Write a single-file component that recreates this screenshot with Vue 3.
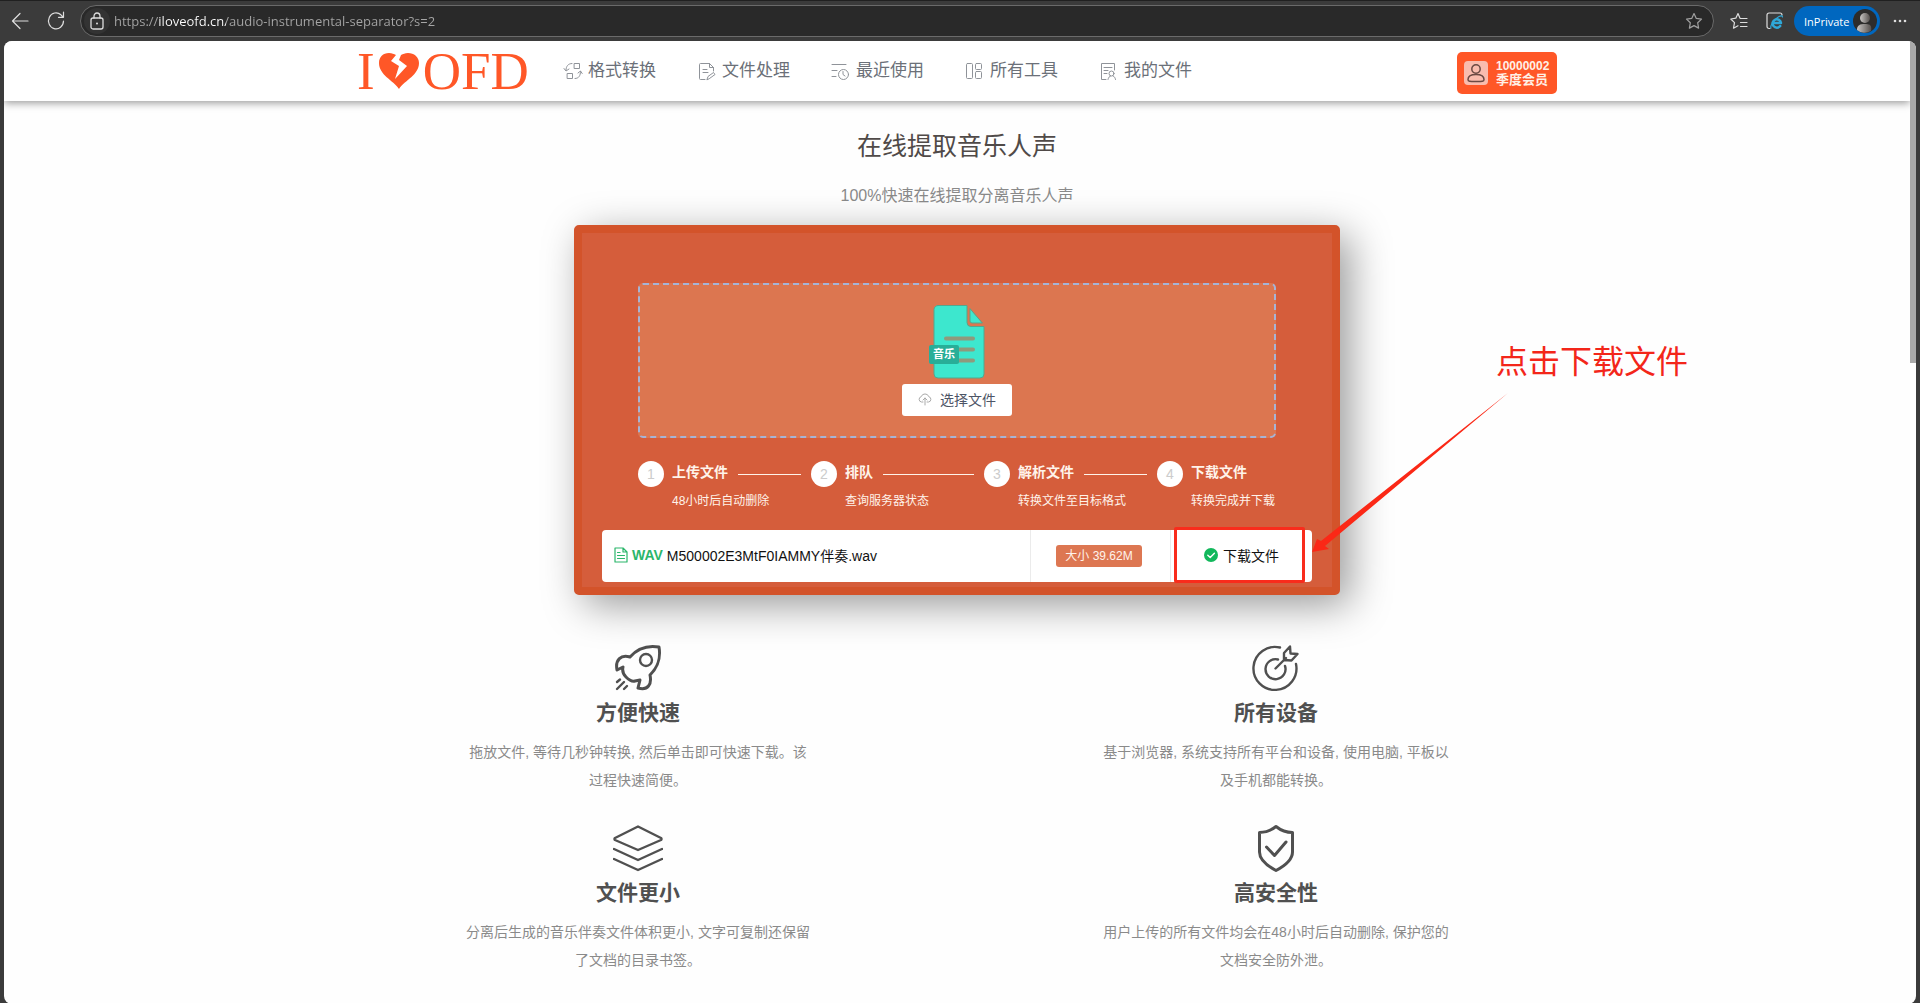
<script setup>
import { ref } from 'vue'

const address = ref('https://iloveofd.cn/audio-instrumental-separator?s=2')

const nav = [
  { icon: 'swap', label: '格式转换' },
  { icon: 'edit', label: '文件处理' },
  { icon: 'recent', label: '最近使用' },
  { icon: 'tools', label: '所有工具' },
  { icon: 'mine', label: '我的文件' }
]

const steps = [
  { title: '上传文件', note: '48小时后自动删除' },
  { title: '排队', note: '查询服务器状态' },
  { title: '解析文件', note: '转换文件至目标格式' },
  { title: '下载文件', note: '转换完成并下载' }
]

const features = [
  { icon: 'rocket', title: '方便快速', text: '拖放文件, 等待几秒钟转换, 然后单击即可快速下载。该过程快速简便。' },
  { icon: 'target', title: '所有设备', text: '基于浏览器, 系统支持所有平台和设备, 使用电脑, 平板以及手机都能转换。' },
  { icon: 'layers', title: '文件更小', text: '分离后生成的音乐伴奏文件体积更小, 文字可复制还保留了文档的目录书签。' },
  { icon: 'shield', title: '高安全性', text: '用户上传的所有文件均会在48小时后自动删除, 保护您的文档安全防外泄。' }
]
</script>

<template>
  <div class="browser">
    <div class="toolbar">
      <button class="tool" aria-label="返回">
        <svg width="18" height="18" viewBox="0 0 18 18"><path d="M17 9H1.5M9 1.5 1.5 9 9 16.500" /></svg>
      </button>
      <button class="tool reload" aria-label="刷新">
        <svg width="18" height="20" viewBox="0 0 18 20"><path d="M16.500 10a7.500 8 0 1 1-2.600-6.200L16 6M16.500 1v5.300h-5" /></svg>
      </button>
      <div class="address">
        <span class="lock">
          <svg width="14" height="18" viewBox="0 0 14 18"><rect x="1" y="6" width="12" height="11" rx="2" /><path d="M4 6V4.500a3 3.500 0 0 1 6 0V6" /><circle cx="7" cy="11.500" r="1" class="solid" /></svg>
        </span>
        <input v-model="address" type="text" aria-label="地址" spellcheck="false" />
        <button class="tool star" aria-label="收藏">
          <svg width="18" height="18" viewBox="0 0 18 18"><path d="m9 1.500 2.300 4.900 5.200.7-3.800 3.700.9 5.300L9 13.600l-4.600 2.500.9-5.300L1.500 7.100l5.200-.7z" /></svg>
        </button>
      </div>
      <button class="tool fav" aria-label="收藏夹">
        <svg width="18" height="18" viewBox="0 0 18 18"><path d="M10 6.200 8 1.500 5.800 6.200l-5 .8 3.700 3.700-1 5.500L8 13.800M10.500 6.500H17M10.500 10.500H17M10.500 14.500H17" /></svg>
      </button>
      <button class="tool ie" aria-label="IE 模式">
        <svg width="18" height="18" viewBox="0 0 18 18"><path d="M4 16.500H3A2 2 0 0 1 1 14.500V3a2 2 0 0 1 2-2h11a2 2 0 0 1 2 2" /><path class="e" d="M6.500 11H15a4.200 4.200 0 1 0-.8 3" /><path class="ring" d="M5 16c-1.500-2 4-9.500 8-11.500 2-1 3.500-1 3.500.500" /></svg>
      </button>
      <button class="private">InPrivate
        <svg width="24" height="24" viewBox="0 0 24 24"><defs><linearGradient id="av"><stop offset="0" stop-color="#c9c6c4" /><stop offset="1" stop-color="#55504d" /></linearGradient></defs><circle cx="12" cy="12" r="12" fill="#2d2c2b" /><circle cx="12" cy="9" r="5" fill="url(#av)" /><path d="M4 21c0-5 3-6 8-6s7 1 6 7a12 12 0 0 1-14-1z" fill="url(#av)" /></svg>
      </button>
      <button class="tool more" aria-label="更多">
        <svg width="16" height="4" viewBox="0 0 16 4"><g class="solid"><circle cx="3" cy="2" r="1.300" /><circle cx="8" cy="2" r="1.300" /><circle cx="13" cy="2" r="1.300" /></g></svg>
      </button>
    </div>

    <div class="window">
      <div class="page">
        <header>
          <div class="container">
            <a class="logo" href="#" aria-label="I love OFD"><span>I</span>
              <svg width="40" height="36" viewBox="0 0 40 36"><path d="M20 36C14 27 0 22 0 10 0 4 4 0 10 0c3 0 5 1 7 2l-5 6 8 5-4 13 12-13-8-6 2-5c2-1 4-2 7-2 6 0 11 4 11 10 0 12-14 17-20 26z" /></svg>
              <span>OFD</span></a>
            <nav>
              <a v-for="item in nav" :key="item.icon" href="#">
                <svg width="20" height="20" viewBox="0 0 20 20">
                  <g v-if="item.icon === 'swap'"><path d="M11.500 2.500h5v5h-5zM4.500 12.500h5v5h-5zM9 2.500C5 2.500 3 5.500 3 9M1 7.500 3 10l3-2M12 17.500c4 0 5.500-3 5.500-7M15 12l2.500-2 1.700 2.500" /></g>
                  <g v-else-if="item.icon === 'edit'"><path d="M8 18.500H3.500a1 1 0 0 1-1-1v-14a1 1 0 0 1 1-1h9l4 4V10M12.500 2.500v4h4M6 8.500h4M6 11.500h5M10 18.500l1-3 5.500-4 1.500 2-5.500 4z" /></g>
                  <g v-else-if="item.icon === 'recent'"><path d="M1 3.500h14M1 9.500h5M1 15.500h4" /><circle cx="12.500" cy="13.500" r="5" /><path d="M12 10.500v3l2 1.500" /></g>
                  <g v-else-if="item.icon === 'tools'"><rect x="1.500" y="2.500" width="6" height="15" rx="1" /><rect x="10.500" y="2.500" width="6" height="6" rx="1" /><rect x="10.500" y="10.500" width="6" height="7" rx="1" /></g>
                  <g v-else><path d="M7 18.500H2.500v-16h13V9M5 6.500h8M5 9.500h4M5 12.500h3" /><circle cx="12.500" cy="12.500" r="2.500" /><path d="M9 18.500c.5-2 1.500-3.500 2.500-3.500M16.500 18.500c-.5-2-1-3-2.500-3.500" /></g>
                </svg>
                {{ item.label }}
              </a>
            </nav>
            <a class="member" href="#">
              <svg width="24" height="24" viewBox="0 0 24 24"><rect width="24" height="24" rx="4" /><circle cx="12" cy="8" r="4.200" /><path d="M4 18.500c0-3.500 2.500-5 8-5s8 1.500 8 5c0 2-1.500 2-8 2s-8 0-8-2z" /></svg>
              <span><b>10000002</b><b class="level">季度会员</b></span>
            </a>
          </div>
        </header>

        <main>
          <h1>在线提取音乐人声</h1>
          <p class="lead">100%快速在线提取分离音乐人声</p>

          <div class="stage">
            <section class="card">
              <div class="drop">
                <svg class="doc" width="56" height="76" viewBox="0 0 56 76">
                  <path class="sheet" d="M9 1.500h29v17a4 4 0 0 0 4 4h13V70a4 4 0 0 1-4 4H9a4 4 0 0 1-4-4V5.500a4 4 0 0 1 4-4z" />
                  <path class="sheet" d="M41 5v12a2 2 0 0 0 2 2h10z" />
                  <path class="rule" d="M17 34.500h27M17 45.500h27M17 56.500h27" />
                  <rect x="0" y="41" width="30" height="19" rx="2" />
                  <text x="15" y="54">音乐</text>
                </svg>
                <button class="choose">
                  <svg width="14" height="14" viewBox="0 0 14 14"><path d="M5 10H3.500a2.700 2.700 0 0 1-.3-5.300 4 4 0 0 1 7.600 0 2.700 2.700 0 0 1-.3 5.300H9M7 13V6M5 8l2-2 2 2" /></svg>
                  选择文件
                </button>
              </div>

              <ol class="steps">
                <li v-for="(step, i) in steps" :key="step.title">
                  <span class="num">{{ i + 1 }}</span>
                  <div class="body">
                    <strong><span>{{ step.title }}</span></strong>
                    <small>{{ step.note }}</small>
                  </div>
                </li>
              </ol>

              <div class="file">
                <div class="name">
                  <svg width="14" height="16" viewBox="0 0 14 16"><path d="M1 1h8l4 4v10H1zM9 1v4h4M3.500 5.500H6M3.500 8.500h7M3.500 11.500h7" /></svg>
                  <b>WAV</b>
                  <span>M500002E3MtF0IAMMY伴奏.wav</span>
                </div>
                <div class="size"><span>大小 39.62M</span></div>
                <div class="get">
                  <button>
                    <svg width="14" height="14" viewBox="0 0 14 14"><circle cx="7" cy="7" r="7" /><path d="m3.800 7.200 2.400 2.300 4.200-4.300" /></svg>
                    下载文件
                  </button>
                  <i class="mark"></i>
                </div>
              </div>
            </section>

            <div class="hint">点击下载文件</div>
            <svg class="arrow" width="206" height="168" viewBox="0 0 206 168"><path d="M6 162 11 149l4 2L202 3 19 156l4 3z" /></svg>
          </div>

          <section class="features">
            <article v-for="item in features" :key="item.icon">
              <svg width="50" height="48" viewBox="0 0 50 48">
                <g v-if="item.icon === 'rocket'"><path class="thick" d="M46 3c-12-2-22 2-29 10C8 10 2 16 4 26l6-3c-1 4 0 7 3 10s6 5 9 4l5-1-2 8c10 3 14-4 12-13 8-8 11-16 9-28z" /><circle cx="33" cy="16" r="6" /><path d="m4 38 3-2.500M4 45l7-7M11 45l3-3" /></g>
                <g v-else-if="item.icon === 'target'"><path d="M29 3.500A21.500 21.500 0 1 0 45 20M27 15.500A10 10 0 1 0 34 22M24.500 24.500 35 14M33 16V9l6-6.500.500 7 7 .500-6 6.500z" /></g>
                <g v-else-if="item.icon === 'layers'"><path d="M25 2.500 48 14a1.200 1.200 0 0 1 0 2L25 26 2 16a1.200 1.200 0 0 1 0-2zM1 25l24 11 24-11M1 35l24 11 24-11" /></g>
                <g v-else><path class="thick" d="M25 2.500c5 4 11 6 16.500 6V28c0 8-8 14-16.500 18.500C16.500 42 8.500 36 8.500 28V8.500c5.500 0 11.500-2 16.500-6z" /><path class="thick" d="m15.500 23 8 8.500L35 18" /></g>
              </svg>
              <h2>{{ item.title }}</h2>
              <p>{{ item.text }}</p>
            </article>
          </section>
        </main>
      </div>
      <div class="scrollbar"></div>
    </div>
  </div>
</template>

<style>
body {
  margin: 0;
  background: #3b3b3b;
}
</style>

<style scoped>
* {
  box-sizing: border-box;
}

.browser {
  display: flex;
  flex-direction: column;
  min-height: 100vh;
  background: #3b3b3b;
  font-family: "Liberation Sans", "Noto Sans CJK SC", sans-serif;
}

button {
  border: 0;
  padding: 0;
  background: none;
  font: inherit;
}

a {
  text-decoration: none;
}

svg {
  display: block;
  flex: none;
  fill: none;
  stroke-linecap: round;
  stroke-linejoin: round;
}

/* browser toolbar */
.toolbar {
  display: flex;
  align-items: center;
  height: 41px;
  padding: 0 12px 0 11px;
  border-top: 1px solid #202020;
}

.tool svg {
  stroke: #dedede;
  stroke-width: 1.2;
}

.tool .solid,
.solid {
  fill: #dedede;
  stroke: none;
}

.reload {
  margin-left: 18px;
}

.address {
  display: flex;
  flex: 1;
  align-items: center;
  height: 32px;
  margin: 0 16px 0 15px;
  padding: 0 10px 0 3px;
  border: 1px solid #6a6a6a;
  border-radius: 16px;
  background: #292929;
}

.lock {
  display: flex;
  align-items: center;
  justify-content: center;
  width: 26px;
  height: 26px;
  border-radius: 13px;
  background: #333;
}

.lock svg {
  stroke: #dedede;
  stroke-width: 1.3;
}

.address input {
  flex: 1;
  min-width: 0;
  height: 24px;
  margin-left: 4px;
  padding: 0;
  border: 0;
  outline: 0;
  font: 13px/24px "Open Sans", "Noto Sans", sans-serif;
  color: transparent;
  background: linear-gradient(to right, #a6a6a6 44px, #fff 44px, #fff 112px, #a6a6a6 112px);
  -webkit-background-clip: text;
  background-clip: text;
}

.star svg {
  stroke: #a0a0a0;
}

.ie {
  margin-left: 18px;
}

.ie .e {
  stroke: #2fa8d8;
  stroke-width: 2.5;
}

.ie .ring {
  stroke: #2fa8d8;
}

.private {
  display: flex;
  align-items: center;
  justify-content: space-between;
  width: 86px;
  height: 30px;
  margin: 0 12px 0 10px;
  padding: 0 3px 0 10px;
  border-radius: 15px;
  background: #0067bf;
  color: #fff;
  font: 11px "Open Sans", "Noto Sans", sans-serif;
}

/* page area */
.window {
  display: flex;
  flex: 1;
  margin: 0 4px;
  border-radius: 8px;
  background: #fefefe;
  overflow: hidden;
}

.page {
  flex: 1;
}

.scrollbar {
  width: 6px;
  height: 322px;
  background: #a9a9a9;
}

header {
  background: #fff;
  box-shadow: 0 2px 8px rgba(0, 0, 0, 0.4);
}

.container {
  display: flex;
  align-items: center;
  width: 1200px;
  height: 60px;
  margin: 0 auto;
}

.logo {
  display: flex;
  align-items: center;
  gap: 4px;
  width: 171px;
  font: 53px/60px "Liberation Serif", serif;
  color: #ff5727;
}

.logo svg {
  fill: #ff5727;
}

nav {
  display: flex;
  gap: 41px;
  margin-left: 35px;
}

nav a {
  display: flex;
  align-items: center;
  gap: 5px;
  font-size: 17px;
  line-height: 24px;
  color: #6b7078;
}

nav svg {
  stroke: #8f9399;
}

.member {
  display: flex;
  align-items: center;
  gap: 8px;
  width: 100px;
  height: 42px;
  margin: 4px 0 0 auto;
  padding-left: 7px;
  border-radius: 5px;
  background: #ff5727;
  color: #fff0e6;
}

.member svg {
  stroke: #6b4a44;
  stroke-width: 1.5;
}

.member rect {
  fill: #f9bcae;
  stroke: none;
}

.member b {
  display: block;
  font-size: 12px;
  line-height: 14px;
}

.member .level {
  font-size: 13px;
}

main {
  padding-top: 25px;
  text-align: center;
}

h1 {
  margin: 0;
  font-size: 25px;
  font-weight: 400;
  line-height: 40px;
  color: #504a48;
}

.lead {
  margin: 18px 0 17px;
  font-size: 16px;
  line-height: 24px;
  color: #8a8a8a;
}

.stage {
  position: relative;
  width: 766px;
  margin: 0 auto;
}

.card {
  padding: 50px 20px 5px;
  border: 8px solid #d3532a;
  border-radius: 5px;
  background: #d55d3b;
  box-shadow: 10px 10px 40px rgba(0, 0, 0, 0.4);
}

.drop {
  display: flex;
  flex-direction: column;
  align-items: center;
  gap: 4px;
  height: 155px;
  margin: 0 36px;
  padding-top: 19px;
  border: 2px dashed #a5b4d6;
  border-radius: 5px;
  background: #dc7650;
}

.sheet {
  fill: #3de7ce;
  stroke: #55a68c;
}

.rule {
  stroke: #8f9a7c;
  stroke-width: 4;
}

.doc rect {
  fill: #28ae98;
}

.doc text {
  font-size: 11px;
  font-weight: 700;
  text-anchor: middle;
  fill: #fff;
}

.choose {
  display: flex;
  align-items: center;
  justify-content: center;
  gap: 8px;
  width: 110px;
  height: 32px;
  padding-bottom: 3px;
  border-radius: 3px;
  background: #fff;
  font-size: 14px;
  color: #4d5566;
}

.choose svg {
  stroke: #aaa;
}

.steps {
  display: flex;
  margin: 23px 36px 19px;
  padding: 0;
  list-style: none;
  text-align: left;
}

.steps li {
  display: flex;
  flex: 1;
  gap: 8px;
  color: #fff3ea;
}

.steps li:last-child {
  flex: 0 0 119px;
}

.num {
  flex: none;
  width: 26px;
  height: 26px;
  border-radius: 13px;
  background: #fff;
  font-size: 14px;
  line-height: 26px;
  text-align: center;
  color: #ccc;
}

.body {
  flex: 1;
}

.steps strong {
  display: flex;
  align-items: center;
  gap: 10px;
  height: 26px;
  margin-right: 10px;
  font-size: 14px;
  line-height: 20px;
  white-space: nowrap;
}

.steps strong span {
  padding-bottom: 5px;
}

.steps li:not(:last-child) strong::after {
  content: "";
  flex: 1;
  height: 1px;
  background: #fff3ea;
}

.steps small {
  display: block;
  margin-top: 4px;
  font-size: 12px;
  line-height: 20px;
  white-space: nowrap;
}

.file {
  display: grid;
  grid-template-columns: 429fr 140fr 141fr;
  height: 52px;
  border-radius: 4px;
  background: #fff;
  font-size: 14px;
  color: #111;
}

.name,
.size,
.get {
  display: flex;
  align-items: center;
}

.name {
  gap: 4px;
  padding-left: 12px;
}

.name,
.get {
  padding-bottom: 3px;
}

.name svg {
  stroke: #2bb66b;
  stroke-width: 1.2;
}

.name b {
  color: #2bb66b;
}

.size,
.get {
  justify-content: center;
}

.size {
  padding-right: 3px;
}

.name,
.size {
  border-right: 1px solid #ebebeb;
}

.size span {
  width: 86px;
  border-radius: 3px;
  background: #dd7752;
  font-size: 12px;
  line-height: 22px;
  color: #fff3ea;
}

.get {
  position: relative;
}

.get button {
  display: flex;
  align-items: center;
  gap: 5px;
  color: #111;
}

.get circle {
  fill: #12b85c;
}

.get path {
  stroke: #fff;
  stroke-width: 1.4;
}

.mark {
  position: absolute;
  inset: -3px 7px -1px 3px;
  border: 3px solid #f92c1c;
  border-radius: 2px;
}

.hint {
  position: absolute;
  left: 922px;
  top: 113px;
  font-size: 32px;
  line-height: 48px;
  white-space: nowrap;
  color: #f3261a;
}

.arrow {
  position: absolute;
  left: 732px;
  top: 165px;
}

.arrow path {
  fill: #fb2816;
}

.features {
  display: grid;
  grid-template-columns: 1fr 1fr;
  row-gap: 30px;
  width: 1276px;
  margin: 49px auto 30px;
}

article {
  display: flex;
  flex-direction: column;
  align-items: center;
}

article svg {
  stroke: #505050;
  stroke-width: 2.4;
}

.thick {
  stroke-width: 3;
}

h2 {
  margin: 0 0 4px;
  font-size: 21px;
  line-height: 42px;
  color: #505050;
}

article p {
  width: 348px;
  margin: 0;
  font-size: 14px;
  line-height: 28px;
  color: #8a8a8a;
}
</style>
